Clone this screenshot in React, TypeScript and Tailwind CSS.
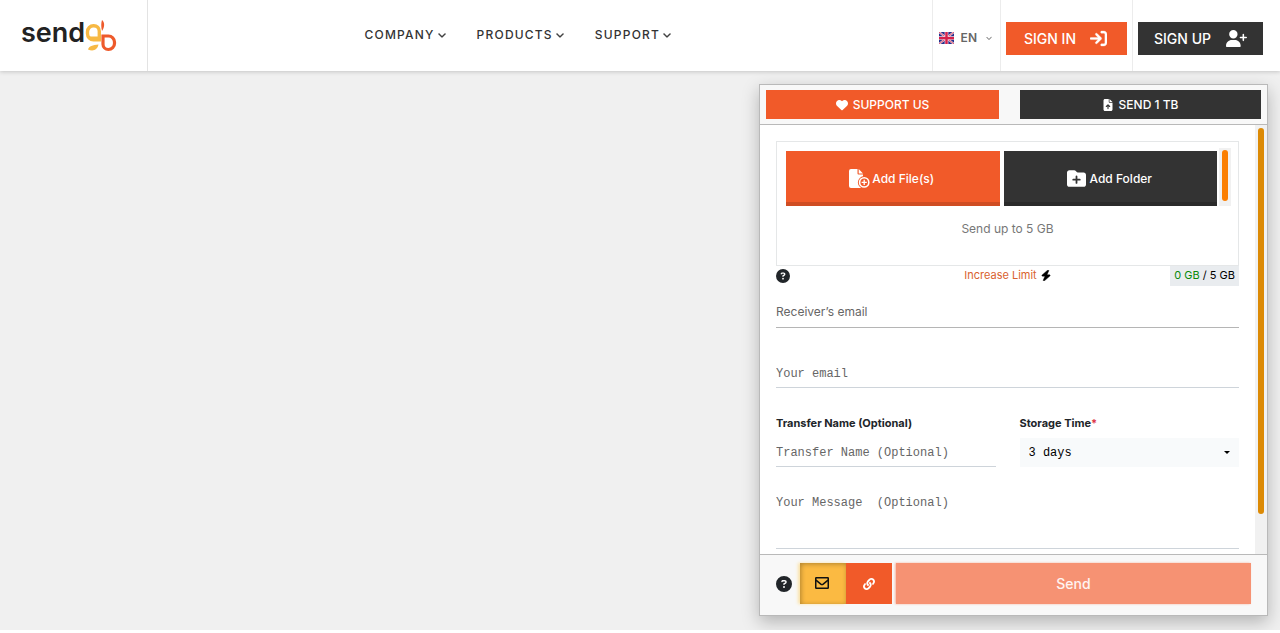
import React, { useState } from 'react';
import { FaLink } from 'react-icons/fa';
import {
  FaArrowRightToBracket,
  FaBolt,
  FaChevronDown,
  FaCircleQuestion,
  FaFileArrowUp,
  FaFolderPlus,
  FaHeart,
  FaUserPlus,
} from 'react-icons/fa6';

const navItems = ['COMPANY', 'PRODUCTS', 'SUPPORT'];

const Logo: React.FC = () => (
  <a href="#" aria-label="sendgb" className="flex items-center">
    <span className="pb-[6px] text-[27px] leading-9 font-semibold text-[#222]">send</span>
    <svg width="34" height="35" viewBox="64 0 34 35">
      <path d="M78.300 21.700h-5.800a6 6 0 0 1-6-6v-2a6 6 0 0 1 6-6h.3a5.500 5.500 0 0 1 5.500 5.500z" fill="none" stroke="#f7b944" strokeWidth="3.400" />
      <path d="M67.500 18.500h11v3h-9z" fill="#f7b944" />
      <path d="M67 31.500c1-3.500 4.500-4.500 10.500-5-1 5-5 7.500-10.500 5z" fill="#f7b944" />
      <path d="M82 18h5.500a6 6 0 0 1 6 6v1.500a6 6 0 0 1-6 6h-.2a5.300 5.300 0 0 1-5.300-5.300z" fill="none" stroke="#ee5a2b" strokeWidth="3.200" />
      <path d="M81 13c-1-4-1-8 0-11 3 2.500 2.700 7 0 11z" fill="#ee5a2b" />
    </svg>
  </a>
);

const UkFlag: React.FC = () => (
  <svg width="15" height="12" viewBox="0 0 28 24" preserveAspectRatio="none">
    <rect width="28" height="24" fill="#23308c" />
    <path d="M0 0l28 24M28 0L0 24" stroke="#f3d3df" strokeWidth="4" />
    <path d="M0 0l28 24M28 0L0 24" stroke="#d5304f" strokeWidth="1.500" />
    <path d="M14 0v24M0 12h28" stroke="#f3d3df" strokeWidth="7" />
    <path d="M14 0v24M0 12h28" stroke="#d5204a" strokeWidth="4.500" />
  </svg>
);

const AddFileIcon: React.FC = () => (
  <svg width="21" height="19" viewBox="0 0 21 19">
    <path d="M2 0h6.500v4.500a1 1 0 0 0 1 1H14v12a1.500 1.500 0 0 1-1.500 1.500H2a2 2 0 0 1-2-2V2a2 2 0 0 1 2-2z" fill="#fff" />
    <path d="M9.700 0L14 4.400H9.700z" fill="#fff" />
    <circle cx="15.200" cy="13.400" r="6.300" fill="#f15a29" />
    <circle cx="15.200" cy="13.400" r="4.600" fill="none" stroke="#fff" strokeWidth="1.600" />
    <path d="M15.200 10.800v5.200M12.600 13.400h5.200" stroke="#fff" strokeWidth="1.300" />
  </svg>
);

const MailIcon: React.FC = () => (
  <svg width="14" height="12" viewBox="0 0 14 12" fill="none" stroke="#111" strokeWidth="1.500">
    <rect x="0.750" y="0.750" width="12.500" height="10.500" rx="0.500" />
    <path d="M1 3.200l4.800 3.900q1.200.9 2.400 0L13 3.200" />
  </svg>
);

const Header: React.FC = () => (
  <header className="relative flex h-[71px] bg-white shadow-[0_1px_4px_rgba(0,0,0,0.18)]">
    <div className="flex w-[148px] items-center border-r border-[#e3e3e3] pl-[21px]">
      <Logo />
    </div>

    <nav className="flex flex-1 items-center justify-center gap-[31px] pr-[44px] pb-[2px] text-xs font-medium tracking-widest text-[#333]">
      {navItems.map((item) => (
        <a key={item} href="#" className="flex items-center gap-[3px]">
          {item}
          <FaChevronDown className="h-2 w-2" stroke="currentColor" strokeWidth={30} />
        </a>
      ))}
    </nav>

    <div className="flex text-sm font-medium">
      <div className="flex items-center border-l border-[#ececec] px-[6px] pt-1">
        <button className="flex items-center gap-[7px] pr-[2px] text-xs font-semibold text-[#666]">
          <UkFlag />
          EN
          <FaChevronDown className="ml-[2px] h-[6px] w-[6px]" />
        </button>
      </div>
      <div className="flex items-center border-l border-[#ececec] px-[5px] pt-[6px]">
        <a href="#" className="flex h-[33px] w-[121px] items-center justify-center gap-[14px] bg-[#f15a29] pr-[2px] text-white">
          SIGN IN
          <FaArrowRightToBracket className="h-[17px] w-[17px]" stroke="currentColor" strokeWidth={10} />
        </a>
      </div>
      <div className="flex items-center border-l border-[#ececec] pt-[6px] pr-[17px] pl-[5px]">
        <a href="#" className="flex h-[33px] w-[125px] items-center justify-center gap-[15px] bg-[#333] text-white">
          SIGN UP
          <FaUserPlus className="h-[17px] w-[21px]" />
        </a>
      </div>
    </div>
  </header>
);

const DropArea: React.FC = () => (
  <div className="border border-[#e5e7e8] px-[9px] pt-[6px] pb-[26px]">
    <div className="-mr-[2px] flex">
      <div className="flex flex-1 gap-1 pt-[3px] text-xs font-medium text-white">
        <button className="flex h-[55px] flex-1 items-center justify-center gap-[2px] border-b-4 border-[#cf4d23] bg-[#f15a29] pt-1 pr-[2px]">
          <AddFileIcon />
          Add File(s)
        </button>
        <button className="flex h-[55px] flex-1 items-center justify-center gap-1 border-b-4 border-[#2a2a2a] bg-[#333] pt-1 pr-[2px]">
          <FaFolderPlus className="h-[19px] w-[19px]" />
          Add Folder
        </button>
      </div>
      <div className="ml-[2px] w-[12px] bg-[#f1f1f1] px-[3px] pt-[2px]">
        <div className="h-[51px] rounded-full bg-[#fb7f02]" />
      </div>
    </div>
    <p className="mt-[13px] text-center text-xs leading-5 text-[#777]">Send up to 5 GB</p>
  </div>
);

const TransferForm: React.FC = () => {
  const [storage, setStorage] = useState('3');

  return (
    <form className="min-w-0 flex-1 px-4 pt-4 pb-[5px]">
      <DropArea />

      <div className="grid h-5 grid-cols-3 items-center text-[11px] text-black">
        <FaCircleQuestion className="h-[14px] w-[14px] text-[#212529]" />
        <a href="#" className="flex items-center justify-center gap-1 pb-[2px] text-[#d9622f]">
          Increase Limit
          <FaBolt className="h-[11px] w-[10px] text-black" stroke="currentColor" strokeWidth={20} />
        </a>
        <span className="h-5 justify-self-end bg-[#e9ecef] px-1 leading-[18px]">
          <span className="text-[#0a8a0a]">0 GB</span> / 5 GB
        </span>
      </div>

      <input
        type="email"
        aria-label="Receiver’s email"
        placeholder="Receiver’s email"
        className="mt-[10px] block h-8 w-full border-b border-[#b5b5b5] text-xs outline-none placeholder:text-[#666]"
      />
      <input
        type="email"
        aria-label="Your email"
        placeholder="Your email"
        className="mt-8 block h-7 w-full border-b border-[#ced4da] font-['Liberation_Mono',monospace] text-xs outline-none placeholder:text-[#666]"
      />

      <div className="mt-[27px] grid grid-cols-2 gap-6">
        <div>
          <label htmlFor="transfer-name" className="block text-[11px] leading-4 font-bold text-[#212529]">
            Transfer Name (Optional)
          </label>
          <input
            id="transfer-name"
            placeholder="Transfer Name (Optional)"
            className="mt-[7px] block h-[29px] w-full border-b border-[#ced4da] pt-[2px] font-['Liberation_Mono',monospace] text-xs outline-none placeholder:text-[#666]"
          />
        </div>
        <div>
          <label htmlFor="storage-time" className="block text-[11px] leading-4 font-bold text-[#212529]">
            Storage Time<span className="text-[#dc3545]">*</span>
          </label>
          <div className="relative mt-[7px]">
            <select
              id="storage-time"
              value={storage}
              onChange={(e) => setStorage(e.target.value)}
              className="block h-[29px] w-full appearance-none bg-[#f8fafb] pl-[9px] font-['Liberation_Mono',monospace] text-xs text-black outline-none"
            >
              <option value="3">3 days</option>
              <option value="7">7 days</option>
            </select>
            <svg className="pointer-events-none absolute top-[13px] right-[9px]" width="6" height="3" viewBox="0 0 6 3">
              <path d="M0 0h6L3 3z" fill="#000" />
            </svg>
          </div>
        </div>
      </div>

      <textarea
        aria-label="Your Message (Optional)"
        placeholder="Your Message  (Optional)"
        className="mt-6 block h-[58px] w-full resize-none border-b border-[#ced4da] pt-1 font-['Liberation_Mono',monospace] text-xs leading-4 outline-none placeholder:text-[#666]"
      />
    </form>
  );
};

const App: React.FC = () => {
  return (
    <div className="bg-[#f0f0f0] font-[Inter,sans-serif]">
      <Header />

      <main className="flex justify-end px-3 pt-[13px] pb-[14px]">
        <section className="w-full max-w-[509px] border border-[#b9b9b9] bg-white shadow-[0_6px_16px_rgba(0,0,0,0.25)]">
          <div className="flex gap-[21px] border-b border-[#b9b9b9] bg-[#f8f8f8] px-[6px] py-[5px] text-xs font-medium text-white">
            <button className="flex h-[29px] w-[233px] items-center justify-center gap-[5px] bg-[#f15a29]">
              <FaHeart className="h-3 w-3" />
              SUPPORT US
            </button>
            <button className="flex h-[29px] flex-1 items-center justify-center gap-[6px] bg-[#333]">
              <FaFileArrowUp className="h-3 w-[10px]" />
              SEND 1 TB
            </button>
          </div>

          <div className="flex">
            <TransferForm />
            <div className="w-3 bg-[#f1f1f1] px-[3px] pt-[3px]">
              <div className="h-[386px] rounded-full bg-[#dc8a05]" />
            </div>
          </div>

          {/* Send bar */}
          <div className="flex items-center border-t border-[#b9b9b9] bg-[#f8f8f8] px-4 pt-2 pb-[11px]">
            <FaCircleQuestion className="mr-2 h-4 w-4 text-[#212529]" />
            <button
              aria-label="Send by email"
              className="flex h-[41px] w-[46px] items-center justify-center bg-[#fbba42] pr-[2px] pb-[2px] shadow-[inset_1px_1px_5px_rgba(0,0,0,0.3),-2px_0_3px_#fbe3a8]"
            >
              <MailIcon />
            </button>
            <button aria-label="Get a link" className="flex h-[41px] w-[46px] items-center justify-center bg-[#f15a29] text-white">
              <FaLink className="h-3 w-3" />
            </button>
            <button className="ml-1 h-[41px] flex-1 bg-[#f69273] text-sm font-medium text-white/90 shadow-[-1px_0_2px_#f7b49e]">
              Send
            </button>
          </div>
        </section>
      </main>
    </div>
  );
};

export default App;
